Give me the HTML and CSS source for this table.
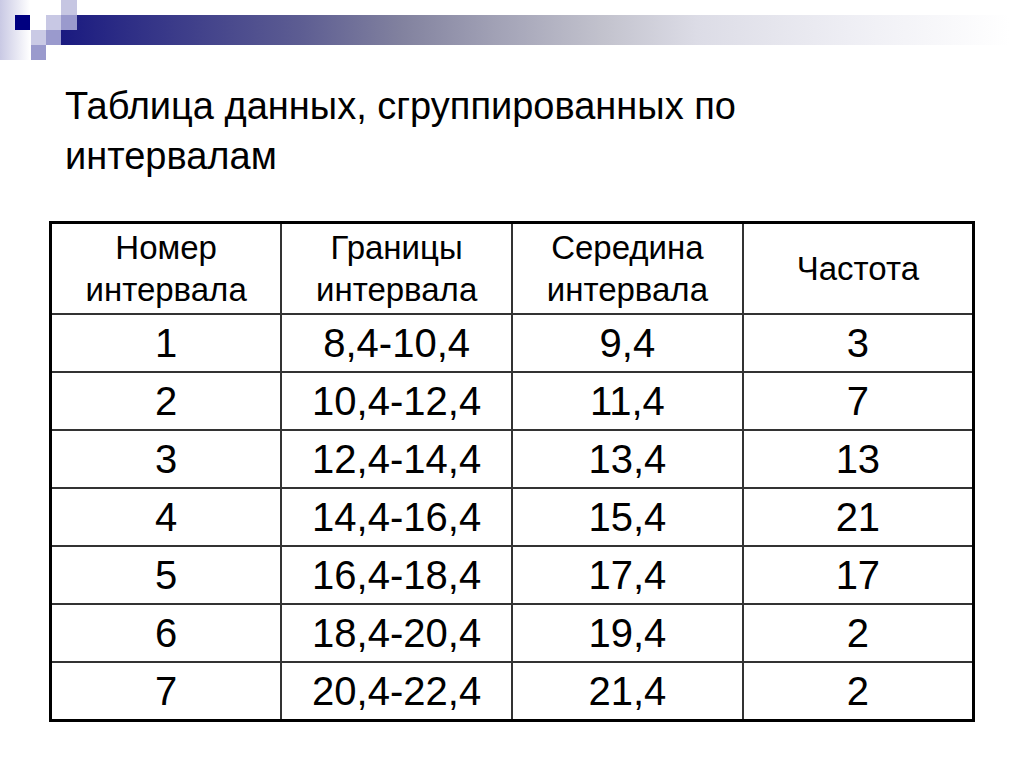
FILE: index.html
```html
<!DOCTYPE html>
<html lang="ru">
<head>
<meta charset="utf-8">
<title>Таблица данных</title>
<link rel="stylesheet" href="styles.css">
</head>
<body>
<div class="slide">
  <header class="deco">
    <svg width="1024" height="60" viewBox="0 0 1024 60" aria-hidden="true">
      <defs>
        <linearGradient id="edge" x1="0" y1="0" x2="1" y2="0">
          <stop offset="0" stop-color="#c9c9e4"/>
          <stop offset="1" stop-color="#ffffff"/>
        </linearGradient>
        <linearGradient id="bar" gradientUnits="userSpaceOnUse" x1="61" y1="0" x2="1010" y2="0">
          <stop offset="0" stop-color="#1a1a80"/>
          <stop offset="0.1" stop-color="#363688"/>
          <stop offset="0.25" stop-color="#5c5c92"/>
          <stop offset="0.36" stop-color="#82829f"/>
          <stop offset="0.46" stop-color="#a2a2b6"/>
          <stop offset="0.57" stop-color="#c2c2cd"/>
          <stop offset="0.67" stop-color="#dcdce6"/>
          <stop offset="0.83" stop-color="#eeeef4"/>
          <stop offset="1" stop-color="#ffffff"/>
        </linearGradient>
      </defs>
      <rect x="0" y="0" width="30" height="60" fill="url(#edge)"/>
      <rect x="77" y="15" width="947" height="15" fill="url(#bar)"/>
      <rect x="61" y="30" width="963" height="15" fill="url(#bar)"/>
      <rect x="15" y="15" width="15" height="15" fill="#000080"/>
      <rect x="61" y="0" width="16" height="15" fill="#c6c6e2"/>
      <rect x="46" y="15" width="15" height="15" fill="#c8c8e4"/>
      <rect x="61" y="15" width="16" height="15" fill="#9a9acd"/>
      <rect x="31" y="30" width="15" height="15" fill="#cacae5"/>
      <rect x="46" y="30" width="15" height="15" fill="#9a9acd"/>
      <rect x="31" y="45" width="15" height="15" fill="#9a9acd"/>
    </svg>
  </header>
  <h1 class="title">Таблица данных, сгруппированных по<br>интервалам</h1>
  <table class="grid">
    <thead>
      <tr>
        <th><span class="t">Номер<br>интервала</span></th>
        <th><span class="t">Границы<br>интервала</span></th>
        <th><span class="t">Середина<br>интервала</span></th>
        <th><span class="t">Частота</span></th>
      </tr>
    </thead>
    <tbody>
      <tr><td><span class="t">1</span></td><td><span class="t">8,4-10,4</span></td><td><span class="t">9,4</span></td><td><span class="t">3</span></td></tr>
      <tr><td><span class="t">2</span></td><td><span class="t">10,4-12,4</span></td><td><span class="t">11,4</span></td><td><span class="t">7</span></td></tr>
      <tr><td><span class="t">3</span></td><td><span class="t">12,4-14,4</span></td><td><span class="t">13,4</span></td><td><span class="t">13</span></td></tr>
      <tr><td><span class="t">4</span></td><td><span class="t">14,4-16,4</span></td><td><span class="t">15,4</span></td><td><span class="t">21</span></td></tr>
      <tr><td><span class="t">5</span></td><td><span class="t">16,4-18,4</span></td><td><span class="t">17,4</span></td><td><span class="t">17</span></td></tr>
      <tr><td><span class="t">6</span></td><td><span class="t">18,4-20,4</span></td><td><span class="t">19,4</span></td><td><span class="t">2</span></td></tr>
      <tr><td><span class="t">7</span></td><td><span class="t">20,4-22,4</span></td><td><span class="t">21,4</span></td><td><span class="t">2</span></td></tr>
    </tbody>
  </table>
</div>
</body>
</html>
```

FILE: styles.css
```css
html, body {
  margin: 0;
  padding: 0;
  background: #ffffff;
}
.slide {
  width: 1024px;
  height: 768px;
  overflow: hidden;
  font-family: "Liberation Sans", Arial, sans-serif;
  color: #000;
}
.deco {
  height: 60px;
  line-height: 0;
}
.deco svg {
  display: block;
}
.title {
  margin: 21px 0 0 65px;
  font-size: 38px;
  font-weight: normal;
  line-height: 50px;
}
.grid {
  margin: 40px 0 0 49px;
  width: 926px;
  border-collapse: collapse;
  table-layout: fixed;
  border: 3px solid #000;
}
.grid th, .grid td {
  border: 2px solid #333;
  padding: 0;
  text-align: center;
  vertical-align: middle;
  font-weight: normal;
}
.grid th {
  height: 89px;
  font-size: 33px;
  line-height: 42px;
}
.grid td {
  height: 56px;
  font-size: 40px;
  line-height: 44px;
}
.t {
  display: inline-block;
}
```
